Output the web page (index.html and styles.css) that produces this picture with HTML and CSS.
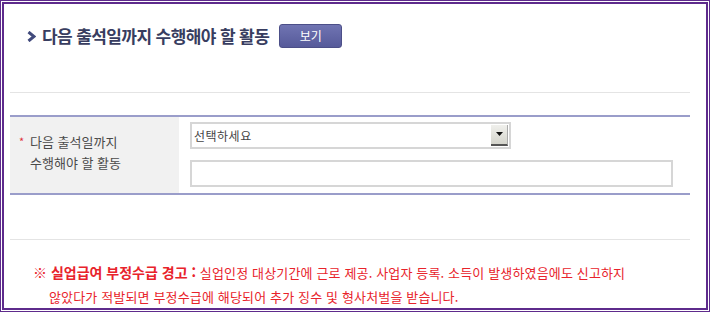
FILE: index.html
```html
<!DOCTYPE html>
<html lang="ko">
<head>
<meta charset="utf-8">
<link rel="stylesheet" href="styles.css">
</head>
<body>
<div class="outer">
  <div class="inner">
    <div class="head">
      <svg class="chev" width="9" height="11" viewBox="0 0 9 11"><polyline points="1.5,1 7,5.5 1.5,10" fill="none" stroke="#414a7c" stroke-width="3"/></svg>
      <h2 class="title">다음 출석일까지 수행해야 할 활동</h2>
      <button class="btn" type="button">보기</button>
    </div>
    <div class="rule"></div>
    <div class="table">
      <div class="label"><span class="star">*</span><span class="ltext">다음 출석일까지<br>수행해야 할 활동</span></div>
      <div class="fields">
        <div class="selwrap">
          <select class="sel"><option>선택하세요</option></select>
          <span class="arrow"><svg width="7" height="5" viewBox="0 0 7 5"><polygon points="0,0 7,0 3.5,4" fill="#111"/></svg></span>
        </div>
        <input class="txt" type="text">
      </div>
    </div>
    <div class="rule rule2"></div>
    <p class="warn"><b>※ 실업급여 부정수급 경고 :</b> 실업인정 대상기간에 근로 제공. 사업자 등록. 소득이 발생하였음에도 신고하지<br>않았다가 적발되면 부정수급에 해당되어 추가 징수 및 형사처벌을 받습니다.</p>
  </div>
</div>
</body>
</html>
```
FILE: styles.css
```css
html, body { margin: 0; padding: 0; background: #fff; }
body { font-family: "Noto Sans CJK KR", "Noto Sans", sans-serif; }
.outer {
  width: 710px; height: 312px; box-sizing: border-box;
  border: 1px solid #5e2b8c; padding: 1px;
}
.inner {
  height: 100%; box-sizing: border-box;
  border: 2px solid #5e2b8c;
  padding: 0 16px 0 6px;
}
.head {
  display: flex; align-items: center;
  height: 88px; box-sizing: border-box;
  padding: 20px 0 44px 17px;
}
.chev { display: block; margin-right: 6px; margin-top: 1px; }
.title {
  margin: 0; font-size: 17px; font-weight: 700; letter-spacing: -0.6px;
  color: #383d60; line-height: 24px;
}
.btn {
  margin-left: 10px; width: 63px; height: 24px; padding: 0;
  border: 1px solid #4c4f88; border-radius: 3px;
  background: linear-gradient(#7074b2, #565a9a);
  color: #fff; font-family: inherit; font-size: 12px; line-height: 20px;
}
.rule { height: 1px; background: #e4e4e4; }
.table {
  display: flex; margin-top: 22px;
  border-top: 2px solid #9a9dca; border-bottom: 2px solid #9a9dca;
  height: 80px; box-sizing: border-box;
}
.label {
  width: 169px; background: #f1f1f1; display: flex;
  padding: 14px 0 0 9px; box-sizing: border-box;
  font-size: 13px; color: #4a4a4a; line-height: 21px;
}
.star { color: #e0303a; width: 11px; font-size: 11px; }
.fields { padding: 5px 0 0 11px; display: flex; flex-direction: column; gap: 11px; }
.selwrap { position: relative; width: 321px; height: 27px; }
.sel {
  appearance: none; -webkit-appearance: none;
  width: 321px; height: 27px; box-sizing: border-box;
  border: 2px solid #d6d6d6; background: #fff; border-radius: 0;
  font-family: inherit; font-size: 12px; letter-spacing: 0.5px; color: #444; padding: 0 0 0 2px;
  margin: 0; outline: none;
}
.arrow {
  position: absolute; right: 3px; top: 3px; width: 17px; height: 21px;
  box-sizing: border-box; display: flex; align-items: center; justify-content: center;
  background: linear-gradient(#f0f0ec, #d4d4cc);
  border-bottom: 2px solid #555; border-right: 1px solid #aaa;
}
.txt {
  width: 483px; height: 27px; box-sizing: border-box; margin: 0;
  border: 2px solid #d6d6d6; background: #fff; outline: none;
}
.rule2 { margin-top: 44px; }
.warn {
  margin: 20px 0 0 0; padding-left: 39px; text-indent: -16px;
  font-size: 13px; line-height: 24px; color: #e8232b; letter-spacing: 0.15px;
}
.warn b { font-weight: 700; font-size: 14px; letter-spacing: 0; }
```
